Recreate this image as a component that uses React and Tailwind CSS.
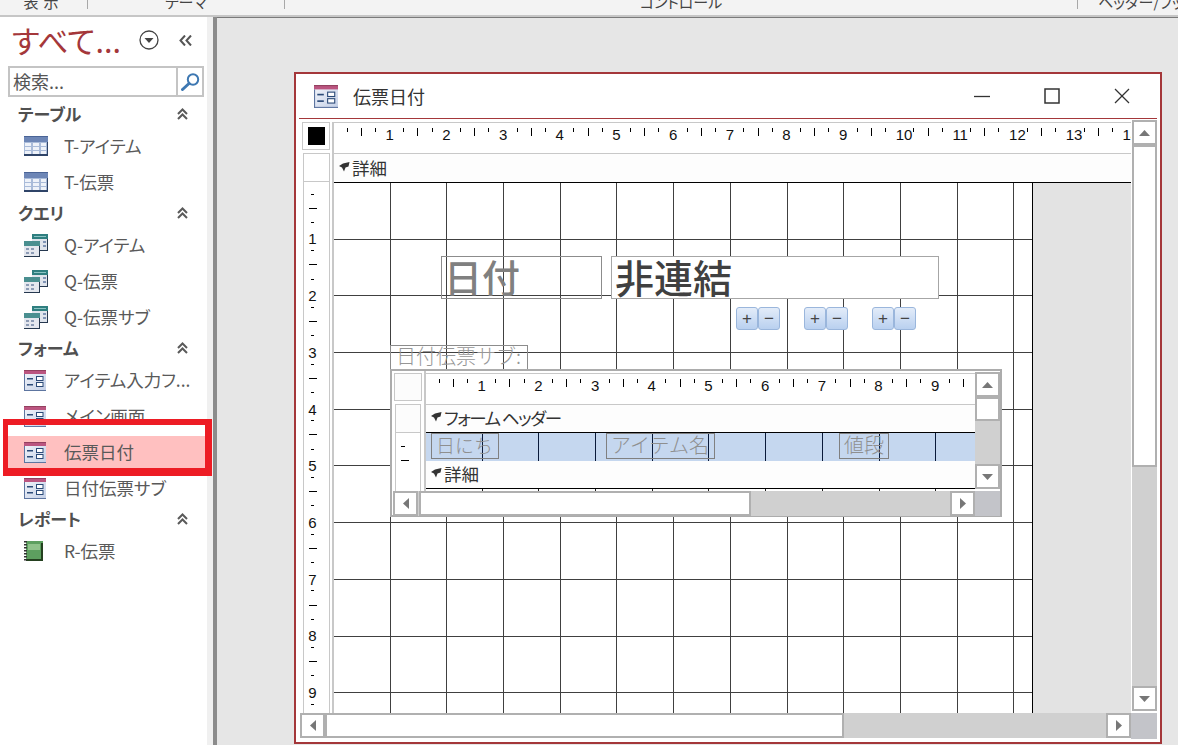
import React from "react";

const CANVAS_XS = [56, 112, 169, 226, 282, 339, 396, 453, 509, 566, 623, 679];
const CANVAS_YS = [56, 112, 169, 226, 282, 339, 396, 453, 509];
const SUB_XS = [56, 112, 169, 226, 282, 339, 396, 453, 509];

const Arrow = ({ dir }) => {
  const points = {
    up: "0,6 5.5,0 11,6",
    down: "0,0 11,0 5.5,6",
    left: "6,0 6,11 0,5.5",
    right: "0,0 0,11 6,5.5",
  };
  const vertical = dir === "up" || dir === "down";
  return (
    <svg width={vertical ? 11 : 6} height={vertical ? 6 : 11} viewBox={vertical ? "0 0 11 6" : "0 0 6 11"}>
      <polygon points={points[dir]} fill="#777777" />
    </svg>
  );
};

const ScrollButton = ({ dir, className }) => (
  <div className={`flex shrink-0 items-center justify-center border-2 border-[#b0b0b0] bg-white ${className}`}>
    <Arrow dir={dir} />
  </div>
);

const VScroll = ({ thumb, className }) => (
  <div className={`flex w-[25px] shrink-0 flex-col bg-[#d0d0d0] ${className}`}>
    <ScrollButton dir="up" className="h-[25px] w-[25px]" />
    <div className={`border-2 border-[#b0b0b0] bg-white ${thumb}`}></div>
    <div className="flex-1"></div>
    <ScrollButton dir="down" className="h-[25px] w-[25px]" />
  </div>
);

const HScroll = ({ thumb, className }) => (
  <div className={`flex h-[25px] bg-[#d0d0d0] ${className}`}>
    <ScrollButton dir="left" className="h-[25px] w-[25px]" />
    <div className={`border-2 border-[#b0b0b0] bg-white ${thumb}`}></div>
    <div className="flex-1"></div>
    <ScrollButton dir="right" className="h-[25px] w-[25px]" />
  </div>
);

const HRuler = ({ count, className }) => {
  const cells = [];
  for (let n = 1; n <= count; n++) cells.push(n);
  return (
    <div className={`flex h-[32px] overflow-hidden border-y border-[#c8c8c8] bg-white pl-[6px] pt-[5px] ${className}`}>
      {cells.map((n) => (
        <div key={n} className="grid h-[14px] w-[56.7px] shrink-0 grid-cols-4">
          <div className="flex justify-center"><div className="h-[4px] w-px bg-black"></div></div>
          <div className="flex justify-center"><div className="h-[8px] w-px bg-black"></div></div>
          <div className="flex justify-center"><div className="h-[4px] w-px bg-black"></div></div>
          <div className="whitespace-nowrap pl-[3px] font-['Liberation_Sans',sans-serif] text-[15px] leading-[13px] text-[#111111]">{n}</div>
        </div>
      ))}
    </div>
  );
};

const VRuler = () => {
  const cells = [1, 2, 3, 4, 5, 6, 7, 8, 9, 10];
  return (
    <div className="ml-px flex min-h-0 w-[27px] flex-1 flex-col overflow-hidden border-x border-[#c8c8c8] pt-[5px]">
      {cells.map((n) => (
        <div key={n} className="flex h-[56.7px] w-[17px] shrink-0 flex-col items-center">
          <div className="flex h-[14.17px] shrink-0 items-center"><div className="h-px w-[3px] bg-black"></div></div>
          <div className="flex h-[14.17px] shrink-0 items-center"><div className="h-px w-[8px] bg-black"></div></div>
          <div className="flex h-[14.17px] shrink-0 items-center"><div className="h-px w-[3px] bg-black"></div></div>
          <div className="mt-[3px] shrink-0 font-['Liberation_Sans',sans-serif] text-[15px] leading-[14px] text-[#111111]">{n}</div>
        </div>
      ))}
    </div>
  );
};

const SectionArrow = () => (
  <svg width="11" height="10" viewBox="0 0 11 10" className="mb-[3px] shrink-0">
    <path d="M10.5 0 L4 1.5 L0 4 L3 5.5 L5 9.5 L6.5 5.5 L9.5 4.5 Z" fill="#333333" />
  </svg>
);

const SectionHeader = ({ label, className }) => (
  <div className={`flex items-center gap-[2px] border-b border-black bg-[#fdfdfd] pl-[5px] text-[17.5px] text-[#333333] ${className}`}>
    <SectionArrow />
    <span>{label}</span>
  </div>
);

const Lines = ({ xs, ys, color }) => (
  <svg className="absolute inset-0 h-full w-full" shapeRendering="crispEdges">
    {xs.map((x) => (
      <rect key={"x" + x} x={x} y="0" width="1" height="100%" fill={color} />
    ))}
    {(ys || []).map((y) => (
      <rect key={"y" + y} x="0" y={y} width="100%" height="1" fill={color} />
    ))}
  </svg>
);

const StepButton = ({ children }) => (
  <div className="flex h-[23px] w-[22px] items-center justify-center rounded-[3px] border border-[#9ab6dc] bg-gradient-to-b from-[#e3ecf9] to-[#b9d0ef] font-['Liberation_Sans',sans-serif] text-[17px] leading-none text-[#444444]">
    {children}
  </div>
);

const Steppers = ({ className }) => (
  <div className={`absolute top-[124px] flex ${className}`}>
    <StepButton>+</StepButton>
    <StepButton>−</StepButton>
  </div>
);

const FormIcon = ({ size = 22 }) => (
  <svg width={size} height={Math.round((size * 21) / 22)} viewBox="0 0 22 21" className="shrink-0">
    <defs>
      <linearGradient id="formBody" x1="0" y1="0" x2="1" y2="1">
        <stop offset="0" stopColor="#f4f6fb" />
        <stop offset="1" stopColor="#c3cfe6" />
      </linearGradient>
    </defs>
    <rect width="22" height="21" fill="url(#formBody)" />
    <rect width="22" height="4" fill="#bb5580" />
    <rect width="22" height="1" fill="#93405f" />
    <rect y="4" width="1" height="17" fill="#5d75a0" />
    <rect y="20" width="22" height="1" fill="#5d75a0" />
    <rect x="3" y="8" width="6" height="1.5" fill="#2b4a78" />
    <rect x="3" y="14" width="6" height="1.5" fill="#2b4a78" />
    <rect x="12.5" y="6.5" width="6.5" height="4" fill="#ffffff" stroke="#2b4a78" />
    <rect x="12.5" y="12.5" width="6.5" height="4" fill="#ffffff" stroke="#2b4a78" />
  </svg>
);

const TableIcon = () => (
  <svg width="24" height="20" viewBox="0 0 24 20" className="shrink-0">
    <rect width="24" height="20" fill="#a9bbd9" />
    <rect width="24" height="6" fill="#6d86b6" />
    <rect y="0" width="24" height="1" fill="#4a6496" />
    <rect x="1" y="7" width="6" height="3" fill="#eef2f9" />
    <rect x="9" y="7" width="6" height="3" fill="#eef2f9" />
    <rect x="17" y="7" width="5" height="3" fill="#eef2f9" />
    <rect x="1" y="11" width="6" height="3" fill="#eef2f9" />
    <rect x="9" y="11" width="6" height="3" fill="#eef2f9" />
    <rect x="17" y="11" width="5" height="3" fill="#eef2f9" />
    <rect x="1" y="15" width="6" height="3" fill="#eef2f9" />
    <rect x="9" y="15" width="6" height="3" fill="#eef2f9" />
    <rect x="17" y="15" width="5" height="3" fill="#eef2f9" />
    <rect y="18" width="24" height="2" fill="#2f4468" />
    <rect x="23" y="6" width="1" height="14" fill="#2f4468" />
  </svg>
);

const QueryIcon = () => (
  <svg width="24" height="23" viewBox="0 0 24 23" className="shrink-0">
    <rect x="8" width="16" height="17" fill="#dfe4ec" />
    <rect x="8" width="16" height="5" fill="#2f7f80" />
    <rect x="10" y="2" width="12" height="1" fill="#8cc4c4" />
    <rect x="19" y="7" width="3" height="2" fill="#7f93b5" />
    <rect x="19" y="11" width="3" height="2" fill="#7f93b5" />
    <rect x="23" y="5" width="1" height="12" fill="#26384f" />
    <rect x="16" y="16" width="8" height="1" fill="#26384f" />
    <rect y="7" width="16" height="16" fill="#e4e7ee" />
    <rect y="7" width="16" height="5" fill="#4a8f90" />
    <rect x="2" y="14" width="3" height="2" fill="#8c9bb5" />
    <rect x="7" y="14" width="3" height="2" fill="#8c9bb5" />
    <rect x="2" y="18" width="3" height="2" fill="#8c9bb5" />
    <rect x="7" y="18" width="3" height="2" fill="#8c9bb5" />
    <rect x="15" y="12" width="1" height="11" fill="#26384f" />
    <rect y="22" width="16" height="1" fill="#26384f" />
  </svg>
);

const ReportIcon = () => (
  <svg width="19" height="20" viewBox="0 0 19 20" className="shrink-0">
    <rect x="2" width="17" height="20" fill="#5d9f5f" />
    <rect x="4" y="3" width="12" height="6" fill="#8fc28a" />
    <rect x="17" y="2" width="2" height="18" fill="#24401f" />
    <rect x="2" y="18" width="17" height="2" fill="#24401f" />
    {[0, 3, 6, 9, 12, 15, 18].map((y) => (
      <rect key={y} y={y} width="3" height="1.5" fill="#333333" />
    ))}
  </svg>
);

const GroupChevron = () => (
  <svg width="11" height="12" viewBox="0 0 11 12" fill="none" stroke="#5a5a5a" strokeWidth="2">
    <polyline points="1,6 5.5,1.5 10,6" />
    <polyline points="1,11 5.5,6.5 10,11" />
  </svg>
);

const NavGroup = ({ label }) => (
  <div className="flex h-[27px] items-center pb-[2px] pl-[18px] pr-[19px] text-[17px] font-bold text-[#505050]">
    <span>{label}</span>
    <span className="ml-auto"><GroupChevron /></span>
  </div>
);

const NavItem = ({ icon, label, selected }) => (
  <div className="relative flex h-[36px] items-center pl-[24px] text-[17.5px] text-[#595959]">
    {selected && <div className="absolute bottom-[2px] left-[8px] right-[2px] top-[2px] bg-[#ffc0c0]"></div>}
    <div className="relative flex w-[40px] items-center">{icon}</div>
    <span className="relative whitespace-nowrap">{label}</span>
    {selected && (
      <div className="absolute left-[3px] top-[-15px] z-10 h-[57px] w-[209px] border-b-[8px] border-l-[5px] border-r-[7px] border-t-[6px] border-[#ed1c24]"></div>
    )}
  </div>
);

const Sidebar = () => (
  <div className="w-[207px] shrink-0 bg-white">
    <div className="flex h-[46px] items-center pl-[12px] pr-[15px]">
      <span className="text-[30.5px] leading-none text-[#a4373a]">すべて...</span>
      <svg width="20" height="20" viewBox="0 0 20 20" className="ml-auto">
        <circle cx="10" cy="10" r="9" fill="none" stroke="#444444" strokeWidth="1.3" />
        <polygon points="5.5,8 14.5,8 10,13" fill="#444444" />
      </svg>
      <svg width="13" height="11" viewBox="0 0 13 11" fill="none" stroke="#555555" strokeWidth="2" className="ml-[20px]">
        <polyline points="6,0.5 1.5,5.5 6,10.5" />
        <polyline points="12,0.5 7.5,5.5 12,10.5" />
      </svg>
    </div>
    <div className="ml-[8px] mt-[3px] flex h-[31px] w-[196px] border-2 border-[#c4c4c4]">
      <div className="flex flex-1 items-center pl-[3px] text-[18px] text-[#555555]">検索...</div>
      <div className="flex w-[26px] items-center justify-center border-l-2 border-[#c4c4c4]">
        <svg width="19" height="18" viewBox="0 0 19 18" fill="none" stroke="#3e78b2">
          <circle cx="12" cy="6.5" r="5.2" strokeWidth="2" />
          <line x1="8" y1="10.5" x2="1.5" y2="16.5" strokeWidth="3" strokeLinecap="round" />
        </svg>
      </div>
    </div>
    <div className="mt-[4px]">
      <NavGroup label="テーブル" />
      <NavItem icon={<TableIcon />} label="T-アイテム" />
      <NavItem icon={<TableIcon />} label="T-伝票" />
      <NavGroup label="クエリ" />
      <NavItem icon={<QueryIcon />} label="Q-アイテム" />
      <NavItem icon={<QueryIcon />} label="Q-伝票" />
      <NavItem icon={<QueryIcon />} label="Q-伝票サブ" />
      <NavGroup label="フォーム" />
      <NavItem icon={<FormIcon />} label="アイテム入力フ..." />
      <NavItem icon={<FormIcon />} label="メイン画面" />
      <NavItem icon={<FormIcon />} label="伝票日付" selected />
      <NavItem icon={<FormIcon />} label="日付伝票サブ" />
      <NavGroup label="レポート" />
      <NavItem icon={<ReportIcon />} label="R-伝票" />
    </div>
  </div>
);

const Subform = () => (
  <div className="absolute left-[56px] top-[186px] flex h-[148px] w-[612px] flex-col border-2 border-[#acacac] bg-white">
    <div className="flex h-[120px] shrink-0">
      <div className="ml-[2px] mt-[2px] flex w-[30px] shrink-0 flex-col">
        <div className="h-[28px] w-[28px] border border-[#c8c8c8] bg-[#fcfcfc]"></div>
        <div className="ml-px mt-[3px] h-[29px] w-[26px] border border-[#c8c8c8] bg-[#fcfcfc]"></div>
        <div className="ml-px flex w-[26px] flex-1 flex-col border-x border-[#c8c8c8] pl-[5px] pt-[13px]">
          <div className="h-px w-[4px] bg-black"></div>
          <div className="mt-[13px] h-px w-[8px] bg-black"></div>
        </div>
      </div>
      <div className="flex min-w-0 flex-1 flex-col border-l-2 border-[#c8c8c8]">
        <HRuler count={10} className="mt-[2px] shrink-0" />
        <SectionHeader label="フォーム ヘッダー" className="h-[28px] shrink-0 tracking-[-1.5px]" />
        <div className="relative h-[28px] shrink-0 bg-[#c5d7ef]">
          <Lines xs={SUB_XS} color="#0a1a3a" />
          <div className="absolute left-[5px] top-0 flex h-[26px] w-[68px] items-center border border-[#808080] pb-[2px] pl-[4px] text-[19px] font-light text-[#8f8f8f] [font-feature-settings:normal]">日にち</div>
          <div className="absolute left-[180px] top-0 flex h-[26px] w-[109px] items-center border border-[#808080] pb-[2px] pl-[4px] text-[20px] font-light text-[#8f8f8f] [font-feature-settings:normal]">アイテム名</div>
          <div className="absolute left-[413px] top-0 flex h-[26px] w-[50px] items-center border border-[#808080] pb-[2px] pl-[4px] text-[20px] font-light text-[#8f8f8f] [font-feature-settings:normal]">値段</div>
        </div>
        <SectionHeader label="詳細" className="h-[28px] shrink-0" />
        <div className="relative h-[2px] shrink-0">
          <Lines xs={SUB_XS} color="#222222" />
        </div>
      </div>
      <VScroll thumb="h-[24px]" className="mb-[2px] mt-px" />
    </div>
    <div className="flex flex-1">
      <HScroll thumb="ml-[1px] w-[332px]" className="ml-px h-[24px] flex-1" />
      <div className="w-[25px] shrink-0 bg-[#c3c4c9]"></div>
    </div>
  </div>
);

const Canvas = () => (
  <div className="relative min-h-0 flex-1 overflow-hidden bg-[#e3e3e3]">
    <div className="relative h-full w-[699px] border-r border-black bg-white">
      <Lines xs={CANVAS_XS} ys={CANVAS_YS} color="#404040" />
    </div>
    <div className="absolute left-[107px] top-[73px] flex h-[43px] w-[161px] items-center border border-[#8c8c8c] pb-[3px] pl-[2px] text-[38px] font-medium leading-none text-[#808080]">日付</div>
    <div className="absolute left-[277px] top-[73px] flex h-[43px] w-[328px] items-center border border-[#a6a6a6] bg-white pb-[3px] pl-[3px] text-[39px] font-medium leading-none text-[#404040]">非連結</div>
    <Steppers className="left-[402px]" />
    <Steppers className="left-[470px]" />
    <Steppers className="left-[538px]" />
    <div className="absolute left-[56px] top-[162px] flex h-[25px] w-[138px] items-center border border-[#8c8c8c] pb-[4px] pl-[5px] text-[20px] font-light leading-none text-[#969696] [font-feature-settings:normal]">日付伝票サブ:</div>
    <Subform />
  </div>
);

const WindowFrame = () => (
  <div className="flex h-[672px] w-[868px] shrink-0 flex-col border-2 border-[#a4373a] bg-white">
    <div className="flex h-[44px] shrink-0 items-center pl-[18px]">
      <FormIcon size={24} />
      <span className="ml-[15px] text-[18px] text-[#333333]">伝票日付</span>
      <svg width="16" height="16" viewBox="0 0 16 16" className="ml-[549px]" stroke="#333333" strokeWidth="1.3">
        <line x1="0" y1="8.5" x2="16" y2="8.5" />
      </svg>
      <svg width="16" height="16" viewBox="0 0 16 16" className="ml-[54px]" fill="none" stroke="#333333" strokeWidth="1.5">
        <rect x="1" y="1" width="14" height="14" />
      </svg>
      <svg width="16" height="16" viewBox="0 0 16 16" className="ml-[54px]" stroke="#333333" strokeWidth="1.3">
        <line x1="1" y1="1" x2="15" y2="15" />
        <line x1="15" y1="1" x2="1" y2="15" />
      </svg>
    </div>
    <div className="ml-[3px] mr-[3px] h-px shrink-0 bg-[#a4373a]"></div>
    <div className="flex h-[594px] shrink-0">
      <div className="ml-[6px] mt-[3px] flex w-[30px] shrink-0 flex-col">
        <div className="flex h-[28px] w-[28px] shrink-0 items-center justify-center border border-[#c8c8c8]">
          <div className="h-[18px] w-[17px] bg-black"></div>
        </div>
        <div className="ml-px mt-[3px] h-[29px] w-[27px] shrink-0 border border-[#c8c8c8]"></div>
        <VRuler />
      </div>
      <div className="mt-[3px] flex w-[799px] shrink-0 flex-col border-l-2 border-[#c8c8c8]">
        <HRuler count={14} className="shrink-0" />
        <SectionHeader label="詳細" className="h-[29px] shrink-0" />
        <Canvas />
      </div>
      <VScroll thumb="h-[322px]" className="mb-[2px] ml-px mt-px" />
    </div>
    <div className="flex h-[26px] shrink-0">
      <HScroll thumb="w-[519px]" className="ml-[4px] w-[831px]" />
      <div className="w-[26px] shrink-0 bg-[#c3c4c9]"></div>
    </div>
  </div>
);

const RibbonLabel = ({ children, className }) => (
  <div className={`flex h-[9px] shrink-0 justify-center border-r border-[#a8a8a8] ${className}`}>
    <span className="-mt-[6px] whitespace-nowrap text-[15px] leading-[15px] text-[#444444]">{children}</span>
  </div>
);

const App = () => {
  return (
    <div className="flex h-screen flex-col overflow-hidden bg-white font-['Noto_Sans_CJK_JP','Noto_Sans',sans-serif] [font-feature-settings:'palt']">
      <div className="flex h-[17px] shrink-0 overflow-hidden border-b-2 border-[#c6c6c6] bg-[#f3f3f3]">
        <RibbonLabel className="w-[88px]"><span className="tracking-[5px]">表示</span></RibbonLabel>
        <RibbonLabel className="w-[197px]">テーマ</RibbonLabel>
        <RibbonLabel className="w-[793px]">コントロール</RibbonLabel>
        <span className="-mt-[6px] whitespace-nowrap pl-[20px] text-[15px] leading-[15px] text-[#444444]">ヘッダー/フッター</span>
      </div>
      <div className="flex min-h-0 flex-1">
        <Sidebar />
        <div className="w-[6px] shrink-0 bg-[#f0f0f0]"></div>
        <div className="w-[4px] shrink-0 bg-[#8c8c8c]"></div>
        <div className="min-w-0 flex-1 border-t border-[#7a7a7a] bg-[#e6e6e6] pl-[77px] pt-[54px]">
          <WindowFrame />
        </div>
      </div>
    </div>
  );
};

export default App;
